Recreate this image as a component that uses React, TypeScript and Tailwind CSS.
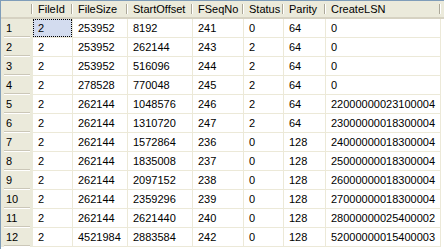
const columns = [
  { name: "FileId", width: "w-[40px]" },
  { name: "FileSize", width: "w-[55px]" },
  { name: "StartOffset", width: "w-[65px]" },
  { name: "FSeqNo", width: "w-[51px]" },
  { name: "Status", width: "w-[40px]" },
  { name: "Parity", width: "w-[42px]" },
  { name: "CreateLSN", width: "w-[115px]" },
];

const rows = [
  ["2", "253952", "8192", "241", "0", "64", "0"],
  ["2", "253952", "262144", "243", "2", "64", "0"],
  ["2", "253952", "516096", "244", "2", "64", "0"],
  ["2", "278528", "770048", "245", "2", "64", "0"],
  ["2", "262144", "1048576", "246", "2", "64", "22000000023100004"],
  ["2", "262144", "1310720", "247", "2", "64", "23000000018300004"],
  ["2", "262144", "1572864", "236", "0", "128", "24000000018300004"],
  ["2", "262144", "1835008", "237", "0", "128", "25000000018300004"],
  ["2", "262144", "2097152", "238", "0", "128", "26000000018300004"],
  ["2", "262144", "2359296", "239", "0", "128", "27000000018300004"],
  ["2", "262144", "2621440", "240", "0", "128", "28000000025400002"],
  ["2", "4521984", "2883584", "242", "0", "128", "52000000015400003"],
];

function HeaderCell({ name, width }: { name: string; width: string }) {
  return (
    <div className={`${width} shrink-0 relative flex items-center pl-[5px]`}>
      <span>{name}</span>
      {/* raised separator */}
      <div className="absolute right-0 top-[3px] bottom-[3px] w-[2px] border-l border-[#aca899] bg-white" />
    </div>
  );
}

export default function App() {
  return (
    <div
      className="w-[444px] h-[249px] overflow-hidden bg-white border-t border-l border-[#7f9db9] text-[11px] leading-none text-black"
      style={{ fontFamily: '"Liberation Sans", Arial, sans-serif' }}
    >
      {/* column header */}
      <div className="flex h-[18px] bg-[#ebeadb] border-b-2 border-[#d6d2c2]">
        <div className="w-[32px] shrink-0 relative">
          <div className="absolute right-0 top-[3px] bottom-[3px] w-[2px] border-l border-[#aca899] bg-white" />
        </div>
        {columns.map((c) => (
          <HeaderCell key={c.name} name={c.name} width={c.width} />
        ))}
        <div className="flex-1" />
      </div>

      {rows.map((row, i) => (
        <div key={i} className="flex h-[19px]">
          <div className="w-[32px] shrink-0 bg-[#ebeadb] relative flex items-center pl-[5px]">
            <span>{i + 1}</span>
            <div className="absolute left-[3px] right-[3px] bottom-0 h-[2px] border-t border-[#cbc7b8] bg-white" />
          </div>
          {row.map((v, j) => {
            const selected = i === 0 && j === 0;
            return (
              <div
                key={j}
                className={`${columns[j].width} shrink-0 border-r border-b border-[#ece9d8] ${
                  selected ? "bg-[#d3dcef]" : "bg-white"
                } relative flex items-center pl-[5px]`}
              >
                {selected && (
                  <div className="absolute inset-0 border border-dotted border-black" />
                )}
                <span className="relative">{v}</span>
              </div>
            );
          })}
        </div>
      ))}
    </div>
  );
}
